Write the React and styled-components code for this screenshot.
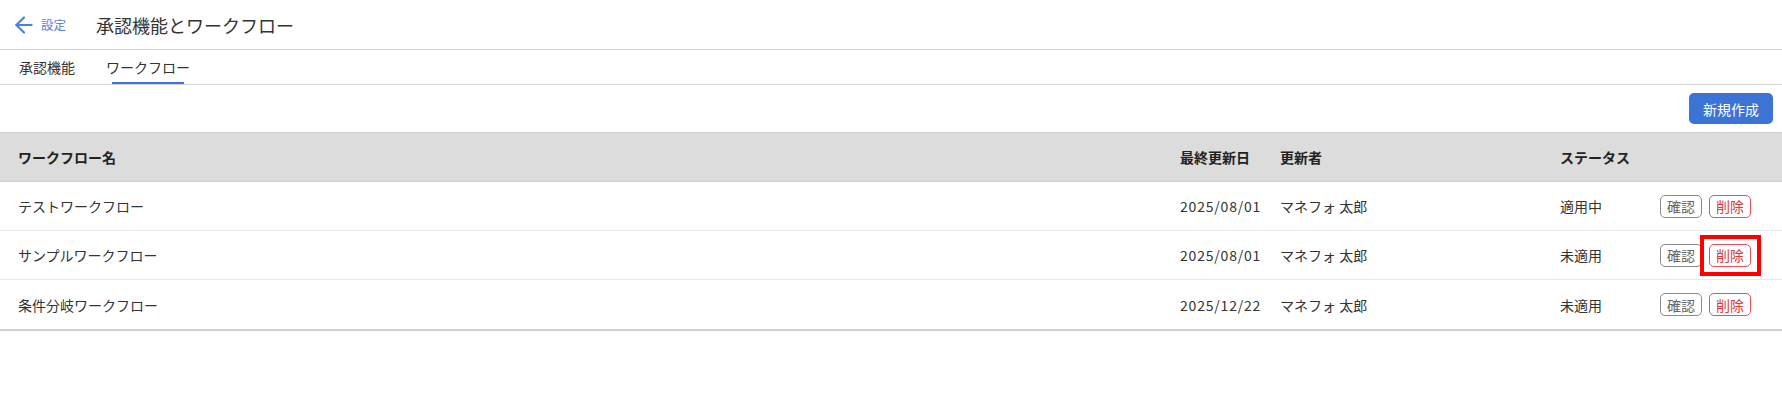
import React from 'react'
import styled, { createGlobalStyle } from 'styled-components'
import { ArrowLeft } from 'lucide-react'

const GlobalStyle = createGlobalStyle`
  html, body {
    margin: 0;
    padding: 0;
    background: #fff;
  }
  body {
    font-family: 'Noto Sans CJK JP', 'Noto Sans', sans-serif;
    color: #333;
  }
`;

const Page = styled.div`
  width: 1782px;
`;

const Header = styled.header`
  height: 49px;
  display: flex;
  align-items: center;
  padding-left: 11px;
  border-bottom: 1px solid #d4d4d4;
`;

const BackLink = styled.a`
  display: flex;
  align-items: center;
  gap: 4px;
  color: #5b80d9;
  font-size: 12.5px;
  text-decoration: none;
  cursor: pointer;

  svg {
    color: #4a7fe0;
  }
`;

const Title = styled.h1`
  margin: 0 0 0 30px;
  font-size: 18px;
  font-weight: 400;
  color: #333;
`;

const Tabs = styled.nav`
  height: 34px;
  display: flex;
  align-items: center;
  gap: 31px;
  padding-left: 19px;
  border-bottom: 1px solid #d4d4d4;
`;

const Tab = styled.div`
  position: relative;
  height: 100%;
  display: flex;
  align-items: center;
  font-size: 14px;
  color: #333;
  cursor: pointer;

  &::after {
    content: '';
    position: absolute;
    left: 6px;
    right: 6px;
    bottom: 0;
    height: 2px;
    background: ${p => (p.$active ? '#3f74d8' : 'transparent')};
  }
`;

const Toolbar = styled.div`
  display: flex;
  justify-content: flex-end;
  padding: 8px 9px 8px;
`;

const PrimaryButton = styled.button`
  width: 84px;
  height: 31px;
  border: none;
  border-radius: 5px;
  background: #3b73d6;
  color: #fff;
  font-family: inherit;
  font-size: 14px;
  cursor: pointer;
`;

const Table = styled.div`
  border-top: 1px solid #cfcfcf;
  border-bottom: 2px solid #d0d0d0;
`;

const Row = styled.div`
  display: grid;
  grid-template-columns: 1162px 100px 280px 100px 1fr;
  align-items: center;
  height: 48px;
  padding-left: 18px;
  font-size: 14px;
  background: ${p => (p.$head ? '#dcdcdc' : '#fff')};
  font-weight: ${p => (p.$head ? 700 : 400)};
  color: ${p => (p.$head ? '#222' : '#333')};
  border-bottom: 1px solid ${p => (p.$head ? '#cfcfcf' : '#e8e8e8')};

  &:last-child {
    border-bottom: none;
    height: 49px;
  }
`;

const DateCell = styled.div`
  letter-spacing: 0.8px;
`;

const Actions = styled.div`
  display: flex;
  gap: 7px;
`;

const SmallButton = styled.button`
  position: relative;
  width: 42px;
  height: 23px;
  padding: 0;
  border-radius: 5px;
  background: #fff;
  font-family: inherit;
  font-size: 14px;
  line-height: 1;
  cursor: pointer;
  border: 1px solid ${p => (p.$danger ? '#e0545a' : '#8a8a8a')};
  color: ${p => (p.$danger ? '#d93a42' : '#666')};

  ${p => p.$highlight && `
    &::after {
      content: '';
      position: absolute;
      top: -10px;
      bottom: -10px;
      left: -10px;
      right: -11px;
      border: 4px solid #ff0000;
      pointer-events: none;
    }
  `}
`;

const rows = [
  { name: 'テストワークフロー', date: '2025/08/01', user: 'マネフォ 太郎', status: '適用中' },
  { name: 'サンプルワークフロー', date: '2025/08/01', user: 'マネフォ 太郎', status: '未適用', highlight: true },
  { name: '条件分岐ワークフロー', date: '2025/12/22', user: 'マネフォ 太郎', status: '未適用' },
];

const App = () => {
  return (
    <Page>
      <GlobalStyle />
      <Header>
        <BackLink>
          <ArrowLeft size={26} strokeWidth={2} />
          設定
        </BackLink>
        <Title>承認機能とワークフロー</Title>
      </Header>
      <Tabs>
        <Tab>承認機能</Tab>
        <Tab $active>ワークフロー</Tab>
      </Tabs>
      <Toolbar>
        <PrimaryButton>新規作成</PrimaryButton>
      </Toolbar>
      <Table>
        <Row $head>
          <div>ワークフロー名</div>
          <div>最終更新日</div>
          <div>更新者</div>
          <div>ステータス</div>
          <div />
        </Row>
        {rows.map(r => (
          <Row key={r.name}>
            <div>{r.name}</div>
            <DateCell>{r.date}</DateCell>
            <div>{r.user}</div>
            <div>{r.status}</div>
            <Actions>
              <SmallButton>確認</SmallButton>
              <SmallButton $danger $highlight={r.highlight}>削除</SmallButton>
            </Actions>
          </Row>
        ))}
      </Table>
    </Page>
  );
};

export default App
